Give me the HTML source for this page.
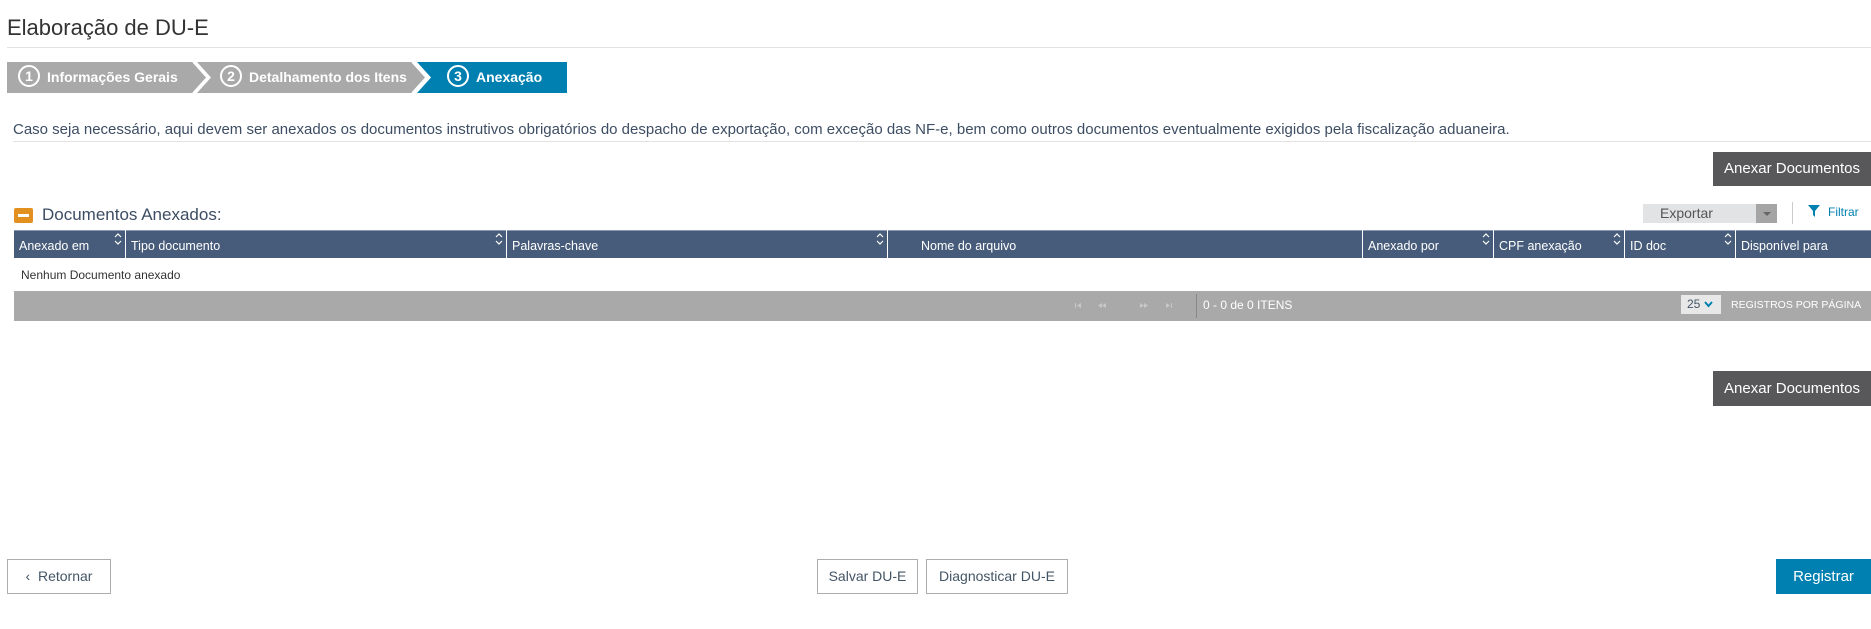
<!DOCTYPE html>
<html><head><meta charset="utf-8"><style>
*{box-sizing:border-box;margin:0;padding:0}
body{width:1871px;height:629px;background:#fff;font-family:"Liberation Sans",sans-serif;position:relative;overflow:hidden;color:#333}
.a{position:absolute}
h1{position:absolute;left:7px;top:15px;font-size:22px;font-weight:normal;color:#333}
.hr{position:absolute;height:1px;background:#e2e2e2}
.step{position:absolute;top:62px;height:31px;color:#fff;font-weight:bold;font-size:14px;line-height:31px}
.num{display:inline-block;width:22px;height:22px;border:2px solid #fff;border-radius:50%;text-align:center;line-height:18px;font-size:14px;margin-right:7px;vertical-align:middle;position:relative;top:-2px}
.btn{position:absolute;background:#58585a;color:#fff;font-size:15px;text-align:center}
.th{position:absolute;top:230px;height:28px;line-height:33px;color:#fff;font-size:12.5px;border-left:1px solid #fff;padding-left:5px}
.th svg{position:absolute;right:3px;top:3px}
.ob{position:absolute;border:1px solid #adadad;background:#fff;color:#456;font-size:14px;text-align:center;top:559px;height:35px;line-height:33px}
</style></head><body>
<h1>Elaboração de DU-E</h1>
<div class="hr" style="left:7px;top:47px;width:1864px"></div>
<svg class="a" style="left:7px;top:62px" width="560" height="31">
<polygon points="0,0 186,0 200,15.5 186,31 0,31" fill="#a9a9a9"/>
<polygon points="190,0 405,0 419,15.5 405,31 190,31 204,15.5" fill="#a9a9a9"/>
<polygon points="410,0 560,0 560,31 410,31 424,15.5" fill="#0080b1"/>
<polyline points="186,0 200,15.5 186,31" fill="none" stroke="#fff" stroke-width="1.5"/>
<polyline points="405,0 419,15.5 405,31" fill="none" stroke="#fff" stroke-width="1.5"/>
</svg>
<div class="step" style="left:18px"><span class="num">1</span>Informações Gerais</div>
<div class="step" style="left:220px"><span class="num">2</span>Detalhamento dos Itens</div>
<div class="step" style="left:447px"><span class="num">3</span>Anexação</div>
<div class="a" style="left:13px;top:121px;font-size:15px;color:#3d4d63">Caso seja necessário, aqui devem ser anexados os documentos instrutivos obrigatórios do despacho de exportação, com exceção das NF-e, bem como outros documentos eventualmente exigidos pela fiscalização aduaneira.</div>
<div class="hr" style="left:13px;top:141px;width:1858px"></div>
<div class="btn" style="left:1713px;top:152px;width:158px;height:34px;line-height:34px">Anexar Documentos</div>
<div class="a" style="left:14px;top:208px;width:19px;height:15px;background:#e2901f;border-radius:2px"><div class="a" style="left:4px;top:6px;width:11px;height:3px;background:#fff"></div></div>
<div class="a" style="left:42px;top:205px;font-size:17px;color:#3d4d63">Documentos Anexados:</div>
<div class="a" style="left:1643px;top:204px;width:134px;height:19px;background:#e2e3e5;font-size:14px;color:#555;line-height:19px;padding-left:17px">Exportar</div>
<div class="a" style="left:1756px;top:204px;width:21px;height:19px;background:#a5a5a5"><div class="a" style="left:7px;top:8px;border:4px solid transparent;border-top:4px solid #666;border-bottom:0"></div></div>
<div class="a" style="left:1792px;top:202px;width:1px;height:22px;background:#ccc"></div>
<svg class="a" style="left:1808px;top:205px" width="12" height="12"><path d="M0,0H12L7,6V12L5,10V6Z" fill="#0080b1"/></svg>
<div class="a" style="left:1828px;top:205px;font-size:12px;color:#0080b1">Filtrar</div>
<div class="a" style="left:14px;top:230px;width:1857px;height:28px;background:#475c7a;border-top:1px solid #8898b0"></div>
<div class="th" style="left:14px;border-left:0;width:111px">Anexado em<svg width="8" height="12"><path d="M1,4 4,1 7,4M1,8 4,11 7,8" fill="none" stroke="#fff" stroke-width="1.2"/></svg></div>
<div class="th" style="left:125px;width:381px">Tipo documento<svg width="8" height="12"><path d="M1,4 4,1 7,4M1,8 4,11 7,8" fill="none" stroke="#fff" stroke-width="1.2"/></svg></div>
<div class="th" style="left:506px;width:381px">Palavras-chave<svg width="8" height="12"><path d="M1,4 4,1 7,4M1,8 4,11 7,8" fill="none" stroke="#fff" stroke-width="1.2"/></svg></div>
<div class="th" style="left:887px;width:475px;padding-left:33px">Nome do arquivo</div>
<div class="th" style="left:1362px;width:131px">Anexado por<svg width="8" height="12"><path d="M1,4 4,1 7,4M1,8 4,11 7,8" fill="none" stroke="#fff" stroke-width="1.2"/></svg></div>
<div class="th" style="left:1493px;width:131px">CPF anexação<svg width="8" height="12"><path d="M1,4 4,1 7,4M1,8 4,11 7,8" fill="none" stroke="#fff" stroke-width="1.2"/></svg></div>
<div class="th" style="left:1624px;width:111px">ID doc<svg width="8" height="12"><path d="M1,4 4,1 7,4M1,8 4,11 7,8" fill="none" stroke="#fff" stroke-width="1.2"/></svg></div>
<div class="th" style="left:1735px;width:136px">Disponível para</div>
<div class="a" style="left:21px;top:268px;font-size:12px;color:#333">Nenhum Documento anexado</div>
<div class="a" style="left:14px;top:291px;width:1857px;height:30px;background:#a9a9a9"></div>
<svg class="a" style="left:1074px;top:301px" width="100" height="10" fill="#c8c8c8">
<rect x="1" y="2" width="1" height="5"/><path d="M7,2 3,4.5 7,7Z"/>
<path d="M28,2 24,4.5 28,7Z M32,2 28,4.5 32,7Z"/>
<path d="M66,2 70,4.5 66,7Z M70,2 74,4.5 70,7Z"/>
<path d="M92,2 96,4.5 92,7Z"/><rect x="97" y="2" width="1" height="5"/>
</svg>
<div class="a" style="left:1196px;top:294px;width:1px;height:24px;background:#888"></div>
<div class="a" style="left:1203px;top:298px;font-size:12px;color:#fff">0 - 0 de 0 ITENS</div>
<div class="a" style="left:1681px;top:295px;width:40px;height:19px;background:#e8e8e8;font-size:12px;color:#456;line-height:19px;padding-left:6px">25 <svg width="9" height="7"><path d="M1,1 4.5,5 8,1" fill="none" stroke="#0080b1" stroke-width="2"/></svg></div>
<div class="a" style="left:1731px;top:299px;font-size:10.5px;color:#fff">REGISTROS POR PÁGINA</div>
<div class="btn" style="left:1713px;top:371px;width:158px;height:35px;line-height:35px">Anexar Documentos</div>
<div class="ob" style="left:7px;width:104px">‹ &nbsp;Retornar</div>
<div class="ob" style="left:817px;width:101px">Salvar DU-E</div>
<div class="ob" style="left:926px;width:142px">Diagnosticar DU-E</div>
<div class="a" style="left:1776px;top:559px;width:95px;height:35px;background:#0080b1;color:#fff;font-size:15px;text-align:center;line-height:35px">Registrar</div>
</body></html>
